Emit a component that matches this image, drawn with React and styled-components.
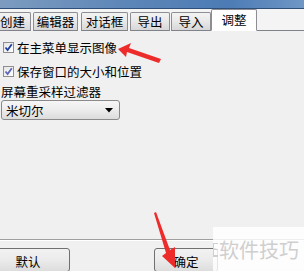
import React from "react";
import styled, { createGlobalStyle } from "styled-components";

const Global = createGlobalStyle`
  html, body { margin: 0; padding: 0; background: #f0f0f0; }
  body { font-family: "Noto Sans CJK SC", "Noto Sans", sans-serif; }
  #root { width: 304px; height: 271px; overflow: hidden; }
`;

const Window = styled.div`
  position: relative;
  width: 304px;
  height: 271px;
  display: flex;
  flex-direction: column;
  background: #f0f0f0;
  overflow: hidden;
`;

const TitleStrip = styled.div`
  height: 8px;
  background: linear-gradient(90deg, #7d9cc0 0%, #5e87b8 40%, #4c7bb5 75%, #6f97c6 100%);
  border-bottom: 1px solid #2f4f78;
`;

const TabRow = styled.div`
  height: 22px;
  display: flex;
  align-items: flex-end;
  background: #f4f4f4;
  margin-left: -6px;
`;

const Tab = styled.div`
  box-sizing: border-box;
  width: ${(p) => p.$w}px;
  margin-right: ${(p) => p.$gap}px;
  height: ${(p) => (p.$active ? 22 : 19)}px;
  display: flex;
  align-items: center;
  justify-content: center;
  font-size: 12.5px;
  line-height: 1;
  color: #000;
  border: 1px solid #8c8e94;
  border-bottom: ${(p) => (p.$active ? "1px solid #ffffff" : "1px solid #7f8288")};
  border-radius: 2px 2px 0 0;
  background: ${(p) =>
    p.$active ? "#ffffff" : "linear-gradient(180deg, #f3f3f3 0%, #e8e8e8 50%, #d7d7d7 100%)"};
  padding-top: ${(p) => (p.$active ? 0 : 1)}px;
`;

const TabFiller = styled.div`
  flex: 1;
  align-self: stretch;
  border-bottom: 1px solid #7f8288;
`;

const Content = styled.div`
  flex: 1;
  display: flex;
  flex-direction: column;
  padding: 6px 0 0 1px;
`;

const CheckRow = styled.label`
  display: flex;
  align-items: center;
  height: 20px;
  gap: 3px;
  margin-bottom: ${(p) => p.$mb || 0}px;
  padding-left: 2px;
  font-size: 12.5px;
  color: #000;
`;

const Box = styled.span`
  box-sizing: border-box;
  width: 11px;
  height: 11px;
  border: 1px solid #8f8f8f;
  background: linear-gradient(135deg, #e6e6e6 0%, #ffffff 100%);
  display: flex;
  align-items: center;
  justify-content: center;
`;

const FieldLabel = styled.div`
  font-size: 12.5px;
  height: 16px;
  line-height: 16px;
  color: #000;
`;

const Select = styled.div`
  box-sizing: border-box;
  width: 119px;
  height: 20px;
  border: 1px solid #8a8a8a;
  border-radius: 3px;
  background: linear-gradient(180deg, #f6f6f6 0%, #ececec 50%, #dcdcdc 100%);
  display: flex;
  align-items: center;
  justify-content: space-between;
  padding: 0 6px 0 4px;
  font-size: 12.5px;
  color: #000;
`;

const Spacer = styled.div`
  flex: 1;
`;

const Divider = styled.div`
  height: 1px;
  background: #a0a0a0;
  border-bottom: 1px solid #ffffff;
`;

const ButtonRow = styled.div`
  display: flex;
  padding-top: 7px;
  height: 23px;
`;

const Button = styled.div`
  box-sizing: border-box;
  flex: none;
  width: ${(p) => p.$w}px;
  margin-left: ${(p) => p.$ml}px;
  height: 24px;
  border: 1px solid #707070;
  border-radius: 3px;
  background: linear-gradient(180deg, #f2f2f2 0%, #ebebeb 50%, #dddddd 100%);
  display: flex;
  justify-content: center;
  padding-top: 3px;
  font-size: 12.5px;
  color: #000;
`;

const Watermark = styled.div`
  position: absolute;
  left: 213px;
  top: 227px;
  width: 91px;
  height: 44px;
  background: rgba(255, 255, 255, 0.82);
  display: flex;
  align-items: center;
  gap: 1px;
  font-size: 20px;
  color: #cfcfcf;
  overflow: hidden;
`;

const LogoBit = styled.span`
  box-sizing: border-box;
  width: 5px;
  height: 14px;
  margin-top: 2px;
  border-left: 1.5px solid #cfcfcf;
  background: linear-gradient(
    180deg,
    #cfcfcf 0 1.5px,
    transparent 1.5px 6px,
    #cfcfcf 6px 7.5px,
    transparent 7.5px 12.5px,
    #cfcfcf 12.5px 14px
  );
`;

const ArrowLayer = styled.svg`
  position: absolute;
  left: 0;
  top: 0;
  pointer-events: none;
`;

export default function App() {
  return (
    <Window>
      <Global />
      <TitleStrip />
      <TabRow>
        <Tab $w={37} $gap={2}>创建</Tab>
        <Tab $w={45} $gap={3}>编辑器</Tab>
        <Tab $w={47} $gap={2}>对话框</Tab>
        <Tab $w={40} $gap={1}>导出</Tab>
        <Tab $w={40} $gap={0}>导入</Tab>
        <Tab $w={46} $gap={0} $active>调整</Tab>
        <TabFiller />
      </TabRow>
      <Content>
        <CheckRow $mb={4}>
          <Box>
            <svg width="9" height="9" viewBox="0 0 9 9">
              <path d="M1.5 4.5 L3.6 7 L7.8 1.2" fill="none" stroke="#1f3f9c" strokeWidth="1.8" />
            </svg>
          </Box>
          在主菜单显示图像
        </CheckRow>
        <CheckRow $mb={3}>
          <Box>
            <svg width="9" height="9" viewBox="0 0 9 9">
              <path d="M1.5 4.5 L3.6 7 L7.8 1.2" fill="none" stroke="#5a66b8" strokeWidth="1.8" />
            </svg>
          </Box>
          保存窗口的大小和位置
        </CheckRow>
        <FieldLabel>屏幕重采样过滤器</FieldLabel>
        <Select>
          <span>米切尔</span>
          <svg width="8" height="5" viewBox="0 0 8 5">
            <path d="M0 0 H8 L4 4.5 Z" fill="#000" />
          </svg>
        </Select>
        <Spacer />
      </Content>
      <Divider />
      <ButtonRow>
        <Button $w={84} $ml={-14}>默认</Button>
        <Button $w={64} $ml={84}>确定</Button>
      </ButtonRow>
      <Watermark>
        <LogoBit />
        <span>软件技巧</span>
      </Watermark>
      <ArrowLayer width="304" height="271" viewBox="0 0 304 271">
        <path d="M118 49 L131 43 L129 48 L161 59 L159 63 L127 52 L126 57 Z" fill="#ee2b2b" />
        <path d="M154 213 L156 212 L170 250 L175 247 L175 268 L162 256 L166 253 Z" fill="#ee2b2b" />
      </ArrowLayer>
    </Window>
  );
}
